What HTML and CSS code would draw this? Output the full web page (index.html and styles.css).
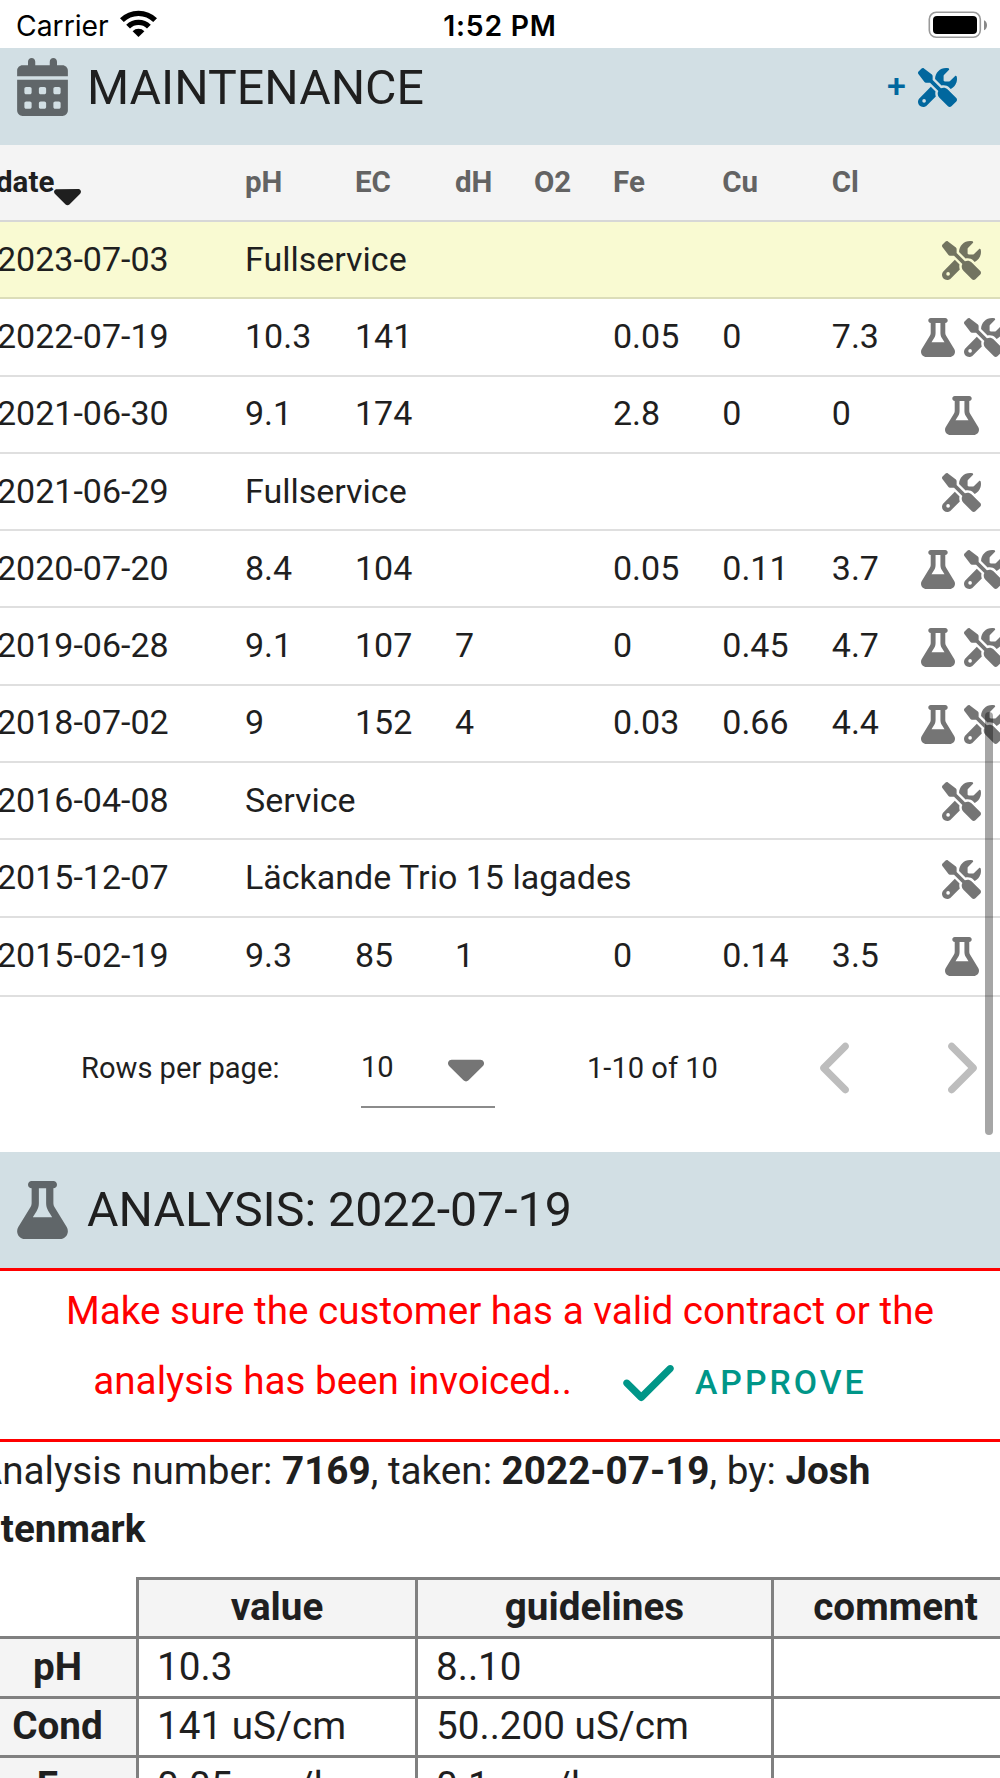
FILE: index.html
```
<!DOCTYPE html>
<html lang="en">

<head>
    <meta charset="UTF-8">
    <meta name="viewport" content="width=device-width, initial-scale=1.0">
    <title>Maintenance</title>
    <link rel="stylesheet" href="styles.css">
</head>

<body>
    <svg class="icon-defs" width="0" height="0">
        <symbol id="icon-tools" viewBox="0 0 512 512">
            <path d="M78.6 5C69.1-2.4 55.6-1.5 47 7L7 47c-8.5 8.5-9.4 22-2.1 31.6l80 104c4.5 5.9 11.6 9.4 19 9.4h54.1l109 109c-14.7 29-10 65.4 14.3 89.6l112 112c12.5 12.5 32.8 12.5 45.3 0l64-64c12.5-12.5 12.5-32.8 0-45.3l-112-112c-24.2-24.2-60.6-29-89.6-14.3l-109-109V104c0-7.5-3.5-14.5-9.4-19L78.6 5zM19.9 396.1C7.2 408.8 0 426.1 0 444.1C0 481.6 30.4 512 67.9 512c18 0 35.3-7.2 48-19.9L233.7 374.3c-7.8-20.9-9-43.6-3.6-65.1l-61.7-61.7L19.9 396.1zM512 144c0-10.5-1.1-20.7-3.2-30.5c-2.4-11.2-16.1-14.1-24.2-6l-63.9 63.9c-3 3-7.1 4.7-11.3 4.7H352c-8.8 0-16-7.2-16-16V102.6c0-4.2 1.7-8.3 4.7-11.3l63.9-63.9c8.1-8.1 5.2-21.8-6-24.2C388.7 1.1 378.5 0 368 0C288.5 0 224 64.5 224 144l0 .8 85.3 85.3c36-9.1 75.8 .5 104 28.7L429 274.5c49-23 83-72.8 83-130.5zM56 432a24 24 0 1 1 48 0 24 24 0 1 1 -48 0z" />
        </symbol>
        <symbol id="icon-flask" viewBox="0 0 448 512">
            <path d="M288 0H160 128C110.3 0 96 14.3 96 32s14.3 32 32 32V196.8c0 11.8-3.3 23.5-9.5 33.5L10.3 406.2C3.6 417.2 0 429.7 0 442.6C0 480.9 31.1 512 69.4 512H378.6c38.3 0 69.4-31.1 69.4-69.4c0-12.8-3.6-25.4-10.3-36.4L329.5 230.4c-6.2-10.1-9.5-21.7-9.5-33.5V64c17.7 0 32-14.3 32-32s-14.3-32-32-32H288zM192 196.8V64h64V196.8c0 23.7 6.6 46.9 19 67.1L309.5 320h-171L173 263.9c12.4-20.2 19-43.4 19-67.1z" />
        </symbol>
        <symbol id="icon-calendar" viewBox="0 0 448 512">
            <path fill-rule="evenodd" d="M128 0c17.7 0 32 14.3 32 32V64H288V32c0-17.7 14.3-32 32-32s32 14.3 32 32V64h48c26.5 0 48 21.5 48 48v48H0V112C0 85.5 21.5 64 48 64H96V32c0-17.7 14.3-32 32-32zM0 192H448V464c0 26.5-21.5 48-48 48H48c-26.5 0-48-21.5-48-48V192zm64 80v32c0 8.8 7.2 16 16 16h32c8.8 0 16-7.2 16-16V272c0-8.8-7.2-16-16-16H80c-8.8 0-16 7.2-16 16zm128 0v32c0 8.8 7.2 16 16 16h32c8.8 0 16-7.2 16-16V272c0-8.8-7.2-16-16-16H208c-8.8 0-16 7.2-16 16zm128 0v32c0 8.8 7.2 16 16 16h32c8.8 0 16-7.2 16-16V272c0-8.8-7.2-16-16-16H336c-8.8 0-16 7.2-16 16zM64 400v32c0 8.8 7.2 16 16 16h32c8.8 0 16-7.2 16-16V400c0-8.8-7.2-16-16-16H80c-8.8 0-16 7.2-16 16zm128 0v32c0 8.8 7.2 16 16 16h32c8.8 0 16-7.2 16-16V400c0-8.8-7.2-16-16-16H208c-8.8 0-16 7.2-16 16zm128 0v32c0 8.8 7.2 16 16 16h32c8.8 0 16-7.2 16-16V400c0-8.8-7.2-16-16-16H336c-8.8 0-16 7.2-16 16z" />
        </symbol>
        <symbol id="icon-caret" viewBox="0 0 320 512">
            <path d="M137.4 374.6c12.5 12.5 32.8 12.5 45.3 0l128-128c9.2-9.2 11.9-22.9 6.9-34.9s-16.6-19.8-29.6-19.8L32 192c-12.9 0-24.6 7.8-29.6 19.8s-2.2 25.7 6.9 34.9l128 128z" />
        </symbol>
        <symbol id="icon-chevron" viewBox="0 0 256 512">
            <path d="M9.4 233.4c-12.5 12.5-12.5 32.8 0 45.3l192 192c12.5 12.5 32.8 12.5 45.3 0s12.5-32.8 0-45.3L77.3 256 246.6 86.6c12.5-12.5 12.5-32.8 0-45.3s-32.8-12.5-45.3 0l-192 192z" />
        </symbol>
        <symbol id="icon-check" viewBox="0 0 448 512">
            <path d="M438.6 105.4c12.5 12.5 12.5 32.8 0 45.3l-256 256c-12.5 12.5-32.8 12.5-45.3 0l-128-128c-12.5-12.5-12.5-32.8 0-45.3s32.8-12.5 45.3 0L160 338.7 393.4 105.4c12.5-12.5 32.8-12.5 45.3 0z" />
        </symbol>
    </svg>

    <div class="status-bar">
        <div class="carrier">
            <span>Carrier</span>
            <svg class="wifi" viewBox="0 0 37 28">
                <g fill="none" stroke="#000" stroke-width="5.4">
                    <path d="M1.9 10.2a23.6 23.6 0 0 1 33.2 0" />
                    <path d="M8.1 16.6a14.8 14.8 0 0 1 20.8 0" />
                </g>
                <path d="M12.6 21.2a8.4 8.4 0 0 1 11.8 0L18.5 27z" />
            </svg>
        </div>
        <div class="time">1:52 PM</div>
        <svg class="battery" viewBox="0 0 60 28">
            <rect x="1.3" y="1.3" width="51" height="25" rx="7" fill="none" stroke="#999" stroke-width="1.6" />
            <rect x="5" y="5" width="44" height="18" rx="4" />
            <path d="M56 9.3c4 1.6 4 8.4 0 10z" fill="#888" />
        </svg>
    </div>

    <div class="section-header maintenance">
        <svg class="icon-title"><use href="#icon-calendar" /></svg>
        <h1>MAINTENANCE</h1>
        <div class="add">
            <span>+</span>
            <svg class="icon-row"><use href="#icon-tools" /></svg>
        </div>
    </div>

    <div class="list">
        <div class="row head">
            <div class="sorted">date<svg class="icon-sort"><use href="#icon-caret" /></svg></div>
            <div>pH</div>
            <div>EC</div>
            <div>dH</div>
            <div>O2</div>
            <div>Fe</div>
            <div>Cu</div>
            <div>Cl</div>
        </div>
        <div class="row selected">
            <div>2023-07-03</div>
            <div class="note">Fullservice</div>
            <div class="icons"><svg class="icon-row"><use href="#icon-tools" /></svg></div>
        </div>
        <div class="row">
            <div>2022-07-19</div>
            <div>10.3</div>
            <div>141</div>
            <div></div>
            <div></div>
            <div>0.05</div>
            <div>0</div>
            <div>7.3</div>
            <div class="icons"><svg class="icon-row flask"><use href="#icon-flask" /></svg><svg class="icon-row"><use href="#icon-tools" /></svg></div>
        </div>
        <div class="row">
            <div>2021-06-30</div>
            <div>9.1</div>
            <div>174</div>
            <div></div>
            <div></div>
            <div>2.8</div>
            <div>0</div>
            <div>0</div>
            <div class="icons"><svg class="icon-row flask"><use href="#icon-flask" /></svg></div>
        </div>
        <div class="row">
            <div>2021-06-29</div>
            <div class="note">Fullservice</div>
            <div class="icons"><svg class="icon-row"><use href="#icon-tools" /></svg></div>
        </div>
        <div class="row">
            <div>2020-07-20</div>
            <div>8.4</div>
            <div>104</div>
            <div></div>
            <div></div>
            <div>0.05</div>
            <div>0.11</div>
            <div>3.7</div>
            <div class="icons"><svg class="icon-row flask"><use href="#icon-flask" /></svg><svg class="icon-row"><use href="#icon-tools" /></svg></div>
        </div>
        <div class="row">
            <div>2019-06-28</div>
            <div>9.1</div>
            <div>107</div>
            <div>7</div>
            <div></div>
            <div>0</div>
            <div>0.45</div>
            <div>4.7</div>
            <div class="icons"><svg class="icon-row flask"><use href="#icon-flask" /></svg><svg class="icon-row"><use href="#icon-tools" /></svg></div>
        </div>
        <div class="row">
            <div>2018-07-02</div>
            <div>9</div>
            <div>152</div>
            <div>4</div>
            <div></div>
            <div>0.03</div>
            <div>0.66</div>
            <div>4.4</div>
            <div class="icons"><svg class="icon-row flask"><use href="#icon-flask" /></svg><svg class="icon-row"><use href="#icon-tools" /></svg></div>
        </div>
        <div class="row">
            <div>2016-04-08</div>
            <div class="note">Service</div>
            <div class="icons"><svg class="icon-row"><use href="#icon-tools" /></svg></div>
        </div>
        <div class="row">
            <div>2015-12-07</div>
            <div class="note">Läckande Trio 15 lagades</div>
            <div class="icons"><svg class="icon-row"><use href="#icon-tools" /></svg></div>
        </div>
        <div class="row last">
            <div>2015-02-19</div>
            <div>9.3</div>
            <div>85</div>
            <div>1</div>
            <div></div>
            <div>0</div>
            <div>0.14</div>
            <div>3.5</div>
            <div class="icons"><svg class="icon-row flask"><use href="#icon-flask" /></svg></div>
        </div>
    </div>

    <div class="pagination">
        <div class="rows-label">Rows per page:</div>
        <div class="select">
            <span>10</span>
            <svg class="icon-caret"><use href="#icon-caret" /></svg>
        </div>
        <div class="range">1-10 of 10</div>
        <svg class="chevron"><use href="#icon-chevron" /></svg>
        <svg class="chevron next"><use href="#icon-chevron" /></svg>
    </div>

    <div class="section-header">
        <svg class="icon-title"><use href="#icon-flask" /></svg>
        <h1>ANALYSIS: 2022-07-19</h1>
    </div>

    <div class="warning">
        <div>Make sure the customer has a valid contract or the</div>
        <div class="warning-line">
            <span>analysis has been invoiced..</span>
            <div class="approve">
                <svg class="icon-check"><use href="#icon-check" /></svg>
                <span>APPROVE</span>
            </div>
        </div>
    </div>

    <div class="analysis">
        <p>Analysis number: <b>7169</b>, taken: <b>2022-07-19</b>, by: <b>Josh<br>Stenmark</b></p>
        <table>
            <tr>
                <td class="corner"></td>
                <th class="value">value</th>
                <th class="guidelines">guidelines</th>
                <th class="comment">comment</th>
            </tr>
            <tr>
                <th>pH</th>
                <td>10.3</td>
                <td>8..10</td>
                <td></td>
            </tr>
            <tr>
                <th>Cond</th>
                <td>141 uS/cm</td>
                <td>50..200 uS/cm</td>
                <td></td>
            </tr>
            <tr>
                <th>Fe</th>
                <td>0.05 mg/l</td>
                <td>0.1 mg/l</td>
                <td></td>
            </tr>
        </table>
    </div>

    <div class="scrollbar"></div>
</body>

</html>
```
FILE: styles.css
```
* {
    margin: 0;
    padding: 0;
    box-sizing: border-box;
}

html {
    overflow: hidden;
}

body {
    position: relative;
    width: 1000px;
    height: 1778px;
    overflow: hidden;
    background-color: #fff;
    color: #1f1f1f;
    font-family: Roboto, sans-serif;
    font-size: 34px;
}

svg {
    display: block;
    flex-shrink: 0;
}

.icon-defs {
    position: absolute;
}

/* phone status bar */
.status-bar {
    display: grid;
    grid-template-columns: 1fr auto 1fr;
    align-items: center;
    height: 48px;
    padding: 0 12px 0 16px;
    color: #000;
    font-family: Inter, sans-serif;
    font-size: 28.3px;
    line-height: 34px;
}

.carrier {
    display: flex;
    align-items: center;
    gap: 11px;
    padding-top: 3px;
}

.wifi {
    width: 37px;
    height: 28px;
    margin-top: -4px;
}

.time {
    padding: 3px 4px 0 0;
    font-weight: 600;
    letter-spacing: 0.8px;
}

.battery {
    justify-self: end;
    width: 60px;
    height: 28px;
    margin-top: 1px;
}

/* section title bars */
.section-header {
    display: flex;
    align-items: center;
    height: 116px;
    padding: 0 43px 0 17px;
    background-color: #d2dfe4;
}

/* scrolled a little under the status bar */
.maintenance {
    height: 97px;
    padding-bottom: 19px;
}

h1 {
    margin-left: 19px;
    padding-top: 1px;
    font-size: 48.3px;
    font-weight: 400;
    line-height: 60px;
}

.icon-title {
    width: 51px;
    height: 58px;
    fill: rgba(0, 0, 0, 0.54);
}

.add {
    display: flex;
    align-items: center;
    gap: 12px;
    margin-left: auto;
    color: #01679e;
    font-weight: 500;
    line-height: 40px;
}

.add span {
    padding-bottom: 5px;
}

.add .icon-row {
    fill: #01679e;
}

.icon-row {
    width: 39px;
    height: 39px;
    fill: rgba(0, 0, 0, 0.54);
}

.icon-row.flask {
    width: 34px;
}

/* maintenance list */
.list {
    width: 1024px;
    margin-left: -3px;
}

.row {
    display: grid;
    grid-template-columns: 248px 110px 100px 79px 79px 109.3px 109.5px 72px 115.5px;
    align-items: center;
    height: 77.3px;
    padding-bottom: 2px;
    border-bottom: 2px solid #dfdfdf;
    line-height: 44px;
}

.row.head {
    height: 77px;
    background-color: #f4f4f4;
    border-color: #d7d7d7;
    color: #636363;
    font-size: 29.5px;
    font-weight: 700;
}

.row.selected {
    background-color: #f9fad2;
    border-color: #dcddb9;
}

.row.last {
    height: 79.5px;
    padding-bottom: 3px;
}

.sorted {
    display: flex;
    margin-left: -1px;
    color: #1f1f1f;
}

.icon-sort {
    width: 27px;
    height: 43px;
    margin: 13px 0 -12px 0;
    fill: #1f1f1f;
}

.note {
    grid-column: 2 / 9;
}

.icons {
    display: flex;
    justify-content: center;
    gap: 9px;
    padding-top: 4px;
}

.pagination {
    display: flex;
    align-items: center;
    height: 154.7px;
    padding: 0 0 14px 81px;
    font-size: 29.1px;
}

.rows-label {
    width: 280px;
}

.select {
    display: flex;
    align-items: center;
    justify-content: space-between;
    width: 134px;
    height: 80px;
    margin-top: 1px;
    padding-right: 11px;
    border-bottom: 2px solid #8b8b8b;
}

.icon-caret {
    width: 36px;
    height: 58px;
    fill: #757575;
}

.range {
    width: 233px;
    margin-left: 92px;
}

.chevron {
    width: 29px;
    height: 58px;
    fill: #bdbdbd;
}

.chevron.next {
    margin-left: 99px;
    transform: scaleX(-1);
}

/* contract warning */
.warning {
    height: 174px;
    padding-top: 5px;
    border-top: 3px solid #f00;
    border-bottom: 3px solid #f00;
    color: #f00;
    font-size: 38.64px;
    line-height: 70px;
    text-align: center;
}

.warning-line {
    display: flex;
    justify-content: center;
}

.approve {
    display: flex;
    align-items: center;
    padding: 5px 40px 0 51px;
    color: #009688;
    font-size: 33.8px;
    font-weight: 500;
    letter-spacing: 0.0893em;
    line-height: 64px;
}

.icon-check {
    width: 51px;
    height: 58px;
    margin-right: 21px;
    fill: #009688;
}

/* analysis details */
.analysis {
    width: 1044px;
    margin-left: -23px;
    font-size: 38.67px;
    line-height: 58px;
}

.analysis p {
    padding-bottom: 19px;
}

table {
    width: 1044px;
    margin-left: -1px;
    border-collapse: collapse;
    table-layout: fixed;
    line-height: 46px;
}

tr {
    height: 59.5px;
}

th,
td {
    padding: 0 18px 2px;
    border: 3px solid #808080;
    text-align: left;
}

th {
    background-color: #f4f4f4;
    text-align: center;
}

.corner {
    width: 160px;
    border-top: none;
    border-left: none;
}

.value {
    width: 279px;
}

.guidelines {
    width: 356px;
}

.scrollbar {
    position: absolute;
    top: 712px;
    left: 985px;
    width: 8px;
    height: 423px;
    border-radius: 4px;
    background-color: rgba(0, 0, 0, 0.35);
}
```
